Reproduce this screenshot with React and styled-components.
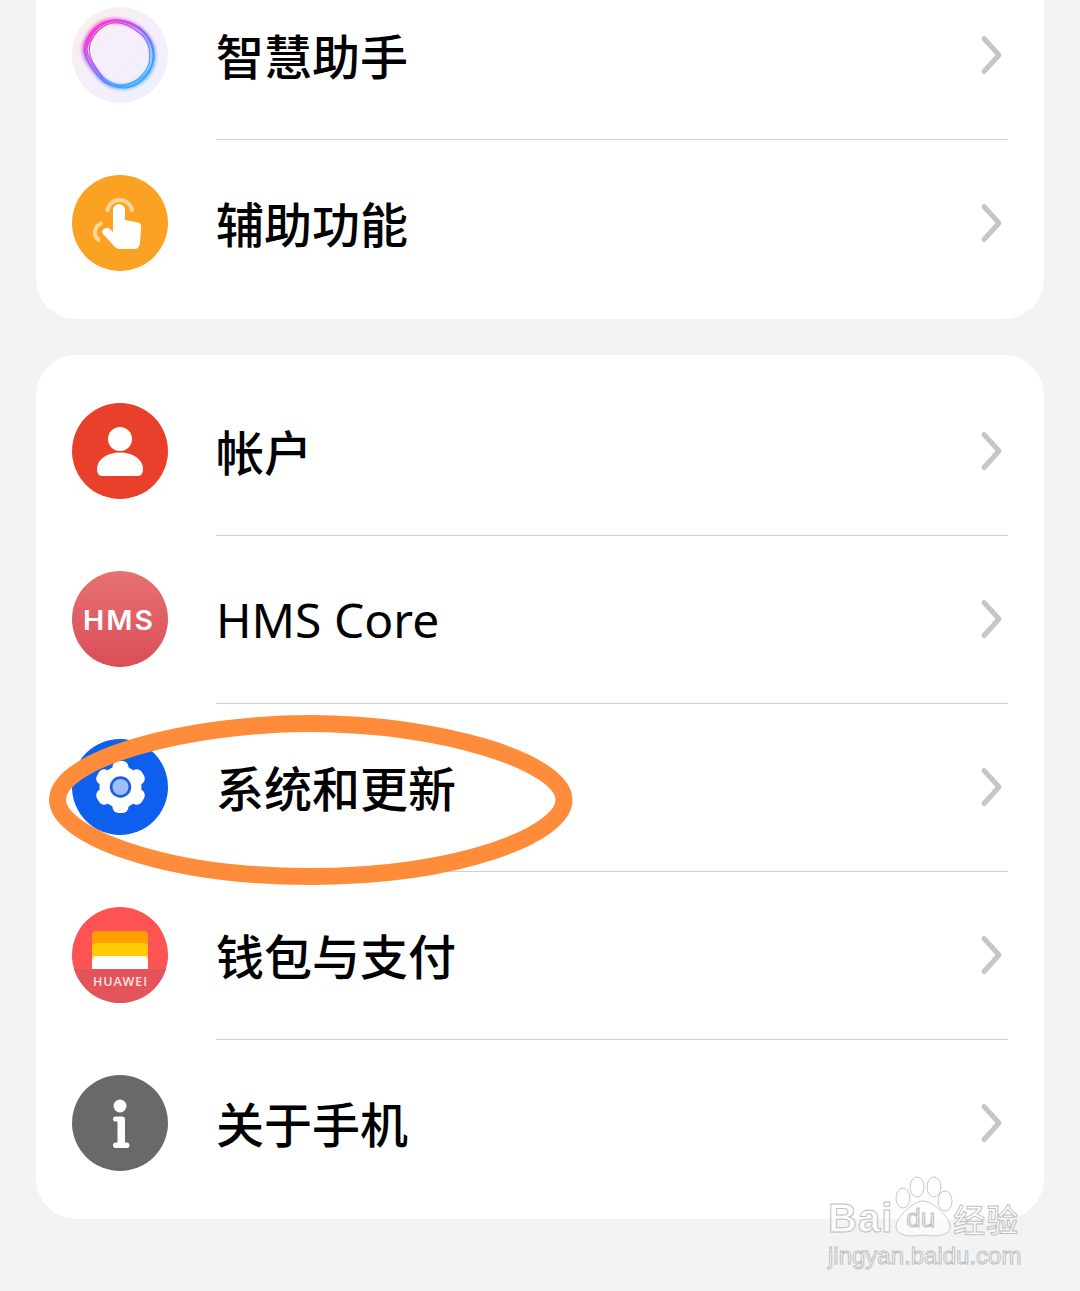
import styled, { createGlobalStyle } from "styled-components";

const GlobalStyle = createGlobalStyle`
  html, body {
    margin: 0;
    padding: 0;
    background: #f1f3f5;
  }
`;

const Page = styled.div`
  position: relative;
  display: flex;
  flex-direction: column;
  gap: 36px;
  width: 1080px;
  height: 1291px;
  padding: 0 36px;
  box-sizing: border-box;
  overflow: hidden;
  background: #f1f3f5;
  font-family: "Noto Sans CJK SC", "Noto Sans", sans-serif;
`;

const Card = styled.div`
  display: flex;
  flex-direction: column;
  flex-shrink: 0;
  margin-top: ${(p) => p.$offset || 0}px;
  padding: 12px 36px;
  background: #fff;
  border-radius: 40px;
`;

const Row = styled.div`
  display: flex;
  align-items: center;
  gap: 48px;
  height: 168px;
`;

const IconBox = styled.div`
  width: 96px;
  height: 96px;
  flex-shrink: 0;
  margin-top: -1px;
  & svg {
    display: block;
  }
`;

const RowBody = styled.div`
  display: flex;
  align-items: center;
  justify-content: space-between;
  align-self: stretch;
  flex: 1;
  margin-bottom: -1px;
  border-bottom: ${(p) => (p.$last ? "1px solid transparent" : "1px solid #cfcfcf")};
`;

const Label = styled.div`
  font-size: 48px;
  line-height: 60px;
  font-weight: 500;
  color: #000;
  margin-top: -3px;
`;

const Latin = styled.span`
  display: block;
  margin-top: 5px;
  font-family: "Noto Sans", sans-serif;
  font-weight: 400;
  font-size: 48px;
`;

const Chevron = () => (
  <svg width="30" height="44" viewBox="0 0 30 44">
    <path d="M6 5.500 L21 22 L6 38.500" fill="none" stroke="#c6c6c6" strokeWidth="5" strokeLinecap="round" strokeLinejoin="round" />
  </svg>
);

const Icon = ({ children }) => (
  <IconBox>
    <svg width="96" height="96" viewBox="0 0 96 96">
      {children}
    </svg>
  </IconBox>
);

const ringA = "M37 14 C47 12 60 16 70 24 C78 32 83 42 81 54 C79 66 70 76 58 79 C46 82 34 78 26 68 C18 58 10 48 13 38 C16 26 26 16 37 14 Z";
const ringB = "M40 16 C50 14 61 20 70 28 C78 36 79 46 77 57 C73 68 63 76 52 78 C40 79 31 72 25 62 C18 53 16 44 18 36 C22 26 30 18 40 16 Z";
const ringC = "M34 16 C46 10 58 14 68 21 C77 29 82 40 82 51 C80 62 72 72 60 76 C48 81 36 80 28 71 C20 62 12 50 14 40 C16 29 24 20 34 16 Z";
const ringD = "M42 13 C52 13 64 18 73 26 C81 34 83 46 80 58 C76 70 66 79 54 81 C42 81 32 76 27 66 C20 58 15 50 15 42 C17 28 28 15 42 13 Z";

const AssistantIcon = () => (
  <Icon>
    <defs>
      <linearGradient id="assistBg" x1="0" y1="0" x2="1" y2="1">
        <stop offset="0%" stopColor="#f7f0e6" />
        <stop offset="45%" stopColor="#f6eefb" />
        <stop offset="100%" stopColor="#eef0fb" />
      </linearGradient>
      <linearGradient id="assistRing" x1="0.1" y1="0.1" x2="0.75" y2="0.95">
        <stop offset="0%" stopColor="#fa2ec8" />
        <stop offset="40%" stopColor="#a85cf0" />
        <stop offset="75%" stopColor="#4a8cff" />
        <stop offset="100%" stopColor="#35a8ff" />
      </linearGradient>
      <filter id="assistGlow" x="-20%" y="-20%" width="140%" height="140%">
        <feGaussianBlur stdDeviation="1.800" />
      </filter>
    </defs>
    <circle cx="48" cy="48" r="48" fill="url(#assistBg)" />
    <g fill="none" stroke="url(#assistRing)">
      <path d={ringA} strokeWidth="5" opacity="0.7" filter="url(#assistGlow)" />
      <path d={ringA} strokeWidth="1.200" />
      <path d={ringB} strokeWidth="1.200" />
      <path d={ringC} strokeWidth="1.200" />
      <path d={ringD} strokeWidth="1.200" />
    </g>
  </Icon>
);

const TouchIcon = () => (
  <Icon>
    <circle cx="48" cy="48" r="48" fill="#fba223" />
    <path d="M35.500 35 A12.500 12.500 0 0 1 60 35" fill="none" stroke="#fdd79a" strokeWidth="4" strokeLinecap="round" />
    <path d="M29 48.500 C22 52 21 60 26.500 65" fill="none" stroke="#fdd79a" strokeWidth="4" strokeLinecap="round" />
    <path d="M41 35 a6 6 0 0 1 12 0 V45 L66 47.500 q3.500 .8 3.200 4.500 L68 68 q-.6 6 -6 6 H47 q-3 0 -5 -3 L31 59 q-2.500 -3.200 1 -5 q3.500 -2 6.500 .5 L41 57 Z" fill="#fff" />
  </Icon>
);

const PersonIcon = () => (
  <Icon>
    <circle cx="48" cy="48" r="48" fill="#e8402a" />
    <circle cx="48" cy="36" r="12" fill="#fff" />
    <path d="M25 66 C25 56 36 49.500 48 49.500 C60 49.500 71 56 71 66 q0 7 -5 7 H30 q-5 0 -5 -7 Z" fill="#fff" />
  </Icon>
);

const HmsIcon = () => (
  <Icon>
    <defs>
      <linearGradient id="hmsBg" x1="0" y1="0" x2="0" y2="1">
        <stop offset="0%" stopColor="#e77170" />
        <stop offset="100%" stopColor="#d94e58" />
      </linearGradient>
    </defs>
    <circle cx="48" cy="48" r="48" fill="url(#hmsBg)" />
    <text x="11" y="59" fontFamily="Inter, sans-serif" fontWeight="600" fontSize="27.500" letterSpacing="2" textLength="72" lengthAdjust="spacingAndGlyphs" fill="#fff">HMS</text>
  </Icon>
);

const GearIcon = () => (
  <Icon>
    <circle cx="48" cy="48" r="48" fill="#0f5fee" />
    <g fill="#fff">
      <circle cx="48.500" cy="48" r="21" />
      <rect x="40.500" y="22" width="16" height="52" rx="6" />
      <rect x="40.500" y="22" width="16" height="52" rx="6" transform="rotate(60 48.500 48)" />
      <rect x="40.500" y="22" width="16" height="52" rx="6" transform="rotate(120 48.500 48)" />
    </g>
    <circle cx="48.500" cy="48" r="10.700" fill="#1d5fe0" />
    <circle cx="48.500" cy="48" r="8" fill="#9fbcfb" />
  </Icon>
);

const WalletIcon = () => (
  <Icon>
    <defs>
      <clipPath id="walletClip">
        <circle cx="48" cy="48" r="48" />
      </clipPath>
    </defs>
    <circle cx="48" cy="48" r="48" fill="#fd5353" />
    <rect x="0" y="62" width="96" height="34" fill="#e4535a" clipPath="url(#walletClip)" />
    <path d="M20 62 V29 q0 -5 5 -5 H71 q5 0 5 5 V62 Z" fill="#ff9f00" />
    <path d="M20 62 V41 q0 -5 5 -5 H71 q5 0 5 5 V62 Z" fill="#ffcb00" />
    <path d="M20 62 V54 q0 -5 5 -5 H71 q5 0 5 5 V62 Z" fill="#fff" />
    <text x="21" y="79" fontFamily="Open Sans, sans-serif" fontWeight="600" fontSize="12.500" textLength="54" fill="#fbe4e4">HUAWEI</text>
  </Icon>
);

const InfoIcon = () => (
  <Icon>
    <circle cx="48" cy="48" r="48" fill="#696969" />
    <circle cx="48" cy="31" r="6.500" fill="#fff" />
    <path d="M43.500 41.500 H50 q3 0 3 3 V67.500 H54.500 q3 0 3 2.700 q0 2.800 -3 2.800 H44 q-3 0 -3 -2.800 q0 -2.700 3 -2.700 H45.500 V46.500 H43.500 q-2.500 0 -2.500 -2.500 q0 -2.500 2.500 -2.500 Z" fill="#fff" />
  </Icon>
);

const HighlightRing = styled.svg`
  position: absolute;
  left: 40px;
  top: 706px;
  pointer-events: none;
`;

const Watermark = styled.div`
  position: absolute;
  left: 828px;
  top: 1174px;
  width: 200px;
  color: rgba(255, 255, 255, 0.6);
  font-family: "Liberation Sans", sans-serif;
  -webkit-text-stroke: 1px rgba(180, 180, 180, 0.85);
  pointer-events: none;
`;

const MarkTop = styled.div`
  display: flex;
  align-items: flex-end;
  height: 64px;
`;

const MarkBai = styled.span`
  font-size: 40px;
  line-height: 40px;
  font-weight: 700;
  letter-spacing: 1px;
`;

const MarkPaw = styled.div`
  position: relative;
  width: 60px;
  height: 64px;
  flex-shrink: 0;
  & svg {
    display: block;
  }
`;

const MarkDu = styled.span`
  position: absolute;
  left: 13px;
  bottom: 6px;
  font-size: 26px;
  line-height: 28px;
  color: rgba(225, 225, 225, 0.6);
`;

const MarkName = styled.span`
  font-family: "Noto Sans CJK SC", sans-serif;
  font-size: 32px;
  line-height: 40px;
  font-weight: 500;
  letter-spacing: 1px;
`;

const MarkUrl = styled.div`
  margin-top: 4px;
  font-size: 24px;
  line-height: 28px;
  white-space: nowrap;
`;

const topItems = [
  { name: "智慧助手", icon: <AssistantIcon /> },
  { name: "辅助功能", icon: <TouchIcon />, last: true },
];

const bottomItems = [
  { name: "帐户", icon: <PersonIcon /> },
  { name: <Latin>HMS Core</Latin>, icon: <HmsIcon /> },
  { name: "系统和更新", icon: <GearIcon /> },
  { name: "钱包与支付", icon: <WalletIcon /> },
  { name: "关于手机", icon: <InfoIcon />, last: true },
];

const SettingRow = ({ item }) => (
  <Row>
    {item.icon}
    <RowBody $last={item.last}>
      <Label>{item.name}</Label>
      <Chevron />
    </RowBody>
  </Row>
);

const App = () => {
  return (
    <Page>
      <GlobalStyle />
      <Card $offset={-41}>
        {topItems.map((item, i) => (
          <SettingRow key={i} item={item} />
        ))}
      </Card>
      <Card>
        {bottomItems.map((item, i) => (
          <SettingRow key={i} item={item} />
        ))}
      </Card>
      <HighlightRing width="540" height="190" viewBox="40 706 540 190">
        <path
          d="M310 723.500 C440 723.500 564 762 564 800 C564 834 460 876.500 310 876.500 C160 876.500 57.500 834 57.500 800 C57.500 758 190 723.500 310 723.500 Z"
          fill="none"
          stroke="#ff8c3a"
          strokeWidth="17"
        />
      </HighlightRing>
      <Watermark>
        <MarkTop>
          <MarkBai>Bai</MarkBai>
          <MarkPaw>
            <svg width="60" height="64" viewBox="0 0 60 64">
              <g fill="rgba(255,255,255,0.55)" stroke="#c8c8c8" strokeWidth="1">
                <ellipse cx="10" cy="24" rx="7" ry="10" />
                <ellipse cx="24" cy="13" rx="7" ry="10" />
                <ellipse cx="41" cy="13" rx="7" ry="10" />
                <ellipse cx="52" cy="27" rx="7" ry="10" />
                <path d="M30 27 C40 27 58 44 57 54 C55 62 44 63 30 61 C16 63 5 62 3 54 C2 44 20 27 30 27 Z" />
              </g>
            </svg>
            <MarkDu>du</MarkDu>
          </MarkPaw>
          <MarkName>经验</MarkName>
        </MarkTop>
        <MarkUrl>jingyan.baidu.com</MarkUrl>
      </Watermark>
    </Page>
  );
};

export default App;
